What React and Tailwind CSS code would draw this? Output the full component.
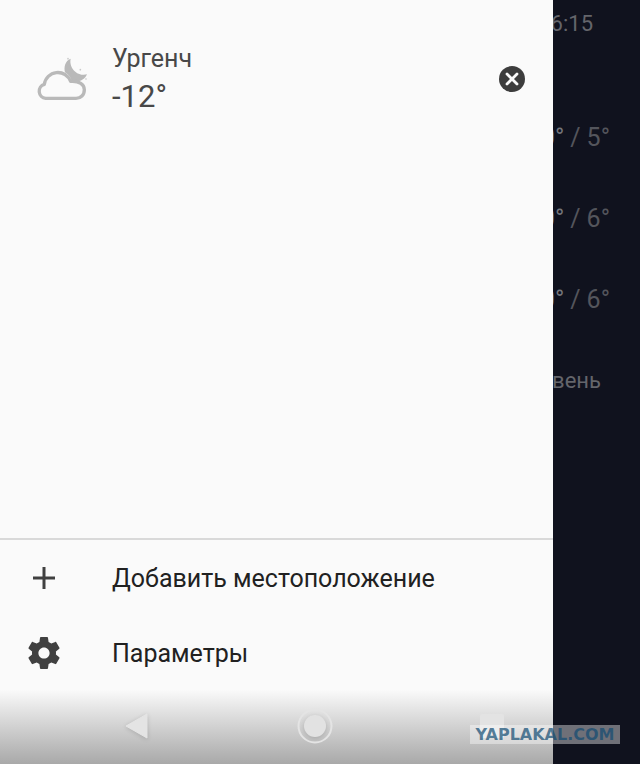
import React from "react";

function CloudMoonIcon() {
  return (
    <svg viewBox="108 72 156 138" className="h-[46px] w-[52px] shrink-0" aria-hidden="true">
      <path
        d="M212 80C195 86 191 106 195 121C206 127 212 137 215 148C238 152 255 143 261 127C250 130 236 128 226 119C214 109 209 94 212 80Z"
        fill="#b9b9b9"
      />
      <circle cx="204" cy="80" r="2.5" fill="#c9c9c9" />
      <circle cx="241" cy="113" r="2.5" fill="#c9c9c9" />
      <circle cx="258" cy="141" r="2.5" fill="#c9c9c9" />
      <path
        d="M137 199A21.500 21.500 0 0 1 133 157A41 41 0 0 1 212 148C238 146 253 158 253 173C253 189 242 199 228 199Z"
        fill="#fafafa"
        stroke="#b9b9b9"
        strokeWidth="10"
        strokeLinejoin="round"
      />
    </svg>
  );
}

function RemoveIcon() {
  return (
    <svg viewBox="0 0 26 26" className="size-[26px]" aria-hidden="true">
      <circle cx="13" cy="13" r="13" fill="#3d3d3d" />
      <path d="M8 8L18 18M18 8L8 18" stroke="#fafafa" strokeWidth="2.8" strokeLinecap="round" />
    </svg>
  );
}

function PlusIcon() {
  return (
    <svg viewBox="0 0 24 24" className="size-6" aria-hidden="true">
      <path d="M12 1V23M1 12H23" stroke="#404040" strokeWidth="3" />
    </svg>
  );
}

function GearIcon() {
  return (
    <svg viewBox="2 2 20 20" className="size-8" aria-hidden="true">
      <path
        fill="#404040"
        d="M19.430 12.980c.04-.32.07-.64.07-.98s-.03-.66-.07-.98l2.110-1.650c.19-.15.24-.42.12-.64l-2-3.460c-.12-.22-.39-.3-.61-.22l-2.490 1c-.52-.4-1.080-.73-1.690-.98l-.38-2.650C14.460 2.180 14.250 2 14 2h-4c-.25 0-.46.18-.49.42l-.38 2.650c-.61.25-1.170.59-1.690.98l-2.490-1c-.23-.09-.49 0-.61.22l-2 3.460c-.13.22-.07.49.12.64l2.110 1.650c-.04.32-.07.65-.07.98s.03.66.07.98l-2.110 1.650c-.19.15-.24.42-.12.64l2 3.460c.12.22.39.3.61.22l2.490-1c.52.4 1.080.73 1.690.98l.38 2.650c.03.24.24.42.49.42h4c.25 0 .46-.18.49-.42l.38-2.650c.61-.25 1.170-.59 1.690-.98l2.490 1c.23.09.49 0 .61-.22l2-3.460c.12-.22.07-.49-.12-.64l-2.110-1.650zM12 15.500c-1.930 0-3.500-1.570-3.500-3.500s1.570-3.500 3.500-3.500 3.500 1.570 3.500 3.500-1.570 3.500-3.500 3.500z"
      />
    </svg>
  );
}

function MenuRow({ icon, label }) {
  return (
    <button type="button" className="flex h-[75px] w-full items-center gap-6 pl-7 text-left text-[25px] text-[#212121]">
      <span className="flex w-[60px] shrink-0">
        <span className="flex w-8 justify-center">{icon}</span>
      </span>
      <span className="pt-0.5">{label}</span>
    </button>
  );
}

function SystemNav() {
  return (
    <nav
      aria-label="Навигация"
      className="flex h-[74px] items-center justify-between bg-linear-to-b from-[#fafafa] to-[#a9a9a9] pr-[49px] pb-0.5 pl-[125px]"
    >
      <button type="button" aria-label="Назад">
        <svg viewBox="0 0 24 28" className="h-7 w-6 drop-shadow-sm" aria-hidden="true">
          <path d="M1 14L22 2V26Z" fill="#e4e4e4" stroke="#e4e4e4" strokeLinejoin="round" />
        </svg>
      </button>
      <button type="button" aria-label="Домой">
        <svg viewBox="0 0 36 36" className="size-9" aria-hidden="true">
          <circle cx="18" cy="18" r="16.500" fill="none" stroke="#e4e4e4" strokeWidth="2" />
          <circle cx="18" cy="18" r="11" fill="#e2e2e2" className="drop-shadow-sm" />
        </svg>
      </button>
      <button type="button" aria-label="Недавние" className="size-6 rounded-xs bg-[#e3e3e3]" />
    </nav>
  );
}

const days = [
  { high: "10°", low: "5°" },
  { high: "10°", low: "6°" },
  { high: "10°", low: "6°" },
];

export default function App() {
  return (
    <div className="relative flex min-h-screen bg-[#10121e] font-[Roboto,sans-serif]">
      <aside className="flex min-w-0 flex-1 flex-col bg-[#fafafa]">
        <div className="flex items-center gap-6 pt-10 pr-7 pl-9">
          <CloudMoonIcon />
          <div className="min-w-0 flex-1 pt-px text-[#484848]">
            <h2 className="text-[25px] leading-9">Ургенч</h2>
            <p className="text-[31px] leading-10">-12°</p>
          </div>
          <button type="button" aria-label="Удалить">
            <RemoveIcon />
          </button>
        </div>
        <div className="mt-auto border-t-2 border-[#d9d9d9]">
          <MenuRow icon={<PlusIcon />} label="Добавить местоположение" />
          <MenuRow icon={<GearIcon />} label="Параметры" />
        </div>
        <SystemNav />
      </aside>
      <section className="w-[87px] shrink-0 overflow-hidden text-[#64656b]">
        <p className="flex justify-end pt-2 pr-[47px] text-[22px] leading-8 whitespace-nowrap">6:15</p>
        <ul className="pt-[57px]">
          {days.map((day, i) => (
            <li key={i} className="flex h-[81px] items-center justify-end gap-[6px] pr-[30px] text-[25px] whitespace-nowrap">
              <span className="text-[#75767c]">{day.high}</span>
              <span className="text-[#54555c]">/</span>
              <span className="text-[#54555c]">{day.low}</span>
            </li>
          ))}
        </ul>
        <p className="flex justify-end pt-[25px] pr-[39px] text-[22px] leading-8 whitespace-nowrap">вень</p>
      </section>
      <div className="absolute right-5 bottom-5 flex h-[19px] w-[150px] items-center justify-center bg-white/40 font-['DejaVu_Sans',sans-serif] text-base font-bold text-[#0f4a72]/70">
        YAPLAKAL.COM
      </div>
    </div>
  );
}
